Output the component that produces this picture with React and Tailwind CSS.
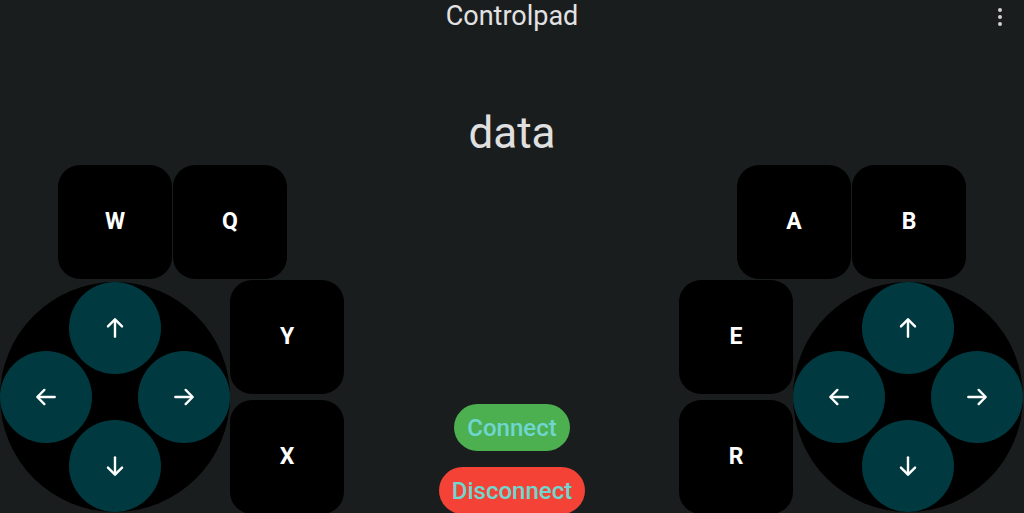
import React from 'react';

const Key = ({ label }) => (
    <button className="w-[114px] h-[114px] shrink-0 rounded-[22px] bg-black text-white font-bold text-[23px] flex items-center justify-center">
        {label}
    </button>
);

const Arrow = ({ dir }) => {
    const rot = { up: 'rotate-0', right: 'rotate-90', down: 'rotate-180', left: '-rotate-90' }[dir];
    return (
        <svg className={rot} width="26" height="26" viewBox="0 0 24 24" fill="none" stroke="white" strokeWidth="2.2" strokeLinecap="round" strokeLinejoin="round">
            <path d="M12 20V4.5" />
            <path d="M5.5 10.5L12 4l6.5 6.5" />
        </svg>
    );
};

const PadButton = ({ dir }) => (
    <button className="w-[92px] h-[92px] rounded-full bg-[#003a40] flex items-center justify-center">
        <Arrow dir={dir} />
    </button>
);

const DPad = () => (
    <div className="w-[230px] h-[230px] shrink-0 rounded-full bg-black flex flex-col items-center">
        <PadButton dir="up" />
        <div className="w-full flex justify-between -my-[23px]">
            <PadButton dir="left" />
            <PadButton dir="right" />
        </div>
        <PadButton dir="down" />
    </div>
);

export default function App() {
    return (
        <div className="w-[1024px] h-[513px] overflow-hidden bg-[#1a1d1e] flex flex-col" style={{ fontFamily: 'Roboto, "Liberation Sans", sans-serif' }}>
            {/* toolbar */}
            <header className="relative h-[32px] shrink-0 flex items-center justify-center">
                <h1 className="text-[27px] text-[#e2e2e2] leading-none">Controlpad</h1>
                <div className="absolute right-[22px] top-[8px] flex flex-col gap-[3px]">
                    <span className="w-[4px] h-[4px] rounded-full bg-[#d0d0d0]"></span>
                    <span className="w-[4px] h-[4px] rounded-full bg-[#d0d0d0]"></span>
                    <span className="w-[4px] h-[4px] rounded-full bg-[#d0d0d0]"></span>
                </div>
            </header>

            <div className="h-[133px] shrink-0 flex items-center justify-center pt-[68px]">
                <span className="text-[44px] text-[#e0e0e0] leading-none">data</span>
            </div>

            <div className="flex justify-between">
                {/* left cluster */}
                <div className="flex flex-col w-[345px]">
                    <div className="flex gap-[1px] pl-[58px]">
                        <Key label="W" />
                        <Key label="Q" />
                    </div>
                    <div className="flex mt-[1px]">
                        <div className="mt-[2px]"><DPad /></div>
                        <div className="flex flex-col gap-[6px]">
                            <Key label="Y" />
                            <Key label="X" />
                        </div>
                    </div>
                </div>

                {/* centre */}
                <div className="flex-1 flex flex-col items-center pt-[239px] gap-[16px]">
                    <button className="h-[47px] px-[13px] rounded-full bg-[#4caf50] text-[#6fd6d0] text-[24px] font-medium">Connect</button>
                    <button className="h-[47px] px-[13px] rounded-full bg-[#f44336] text-[#6fd6d0] text-[24px] font-medium">Disconnect</button>
                </div>

                {/* right cluster */}
                <div className="flex flex-col w-[345px]">
                    <div className="flex gap-[1px] pl-[58px]">
                        <Key label="A" />
                        <Key label="B" />
                    </div>
                    <div className="flex mt-[1px]">
                        <div className="flex flex-col gap-[6px]">
                            <Key label="E" />
                            <Key label="R" />
                        </div>
                        <div className="mt-[2px]"><DPad /></div>
                    </div>
                </div>
            </div>
        </div>
    );
}
